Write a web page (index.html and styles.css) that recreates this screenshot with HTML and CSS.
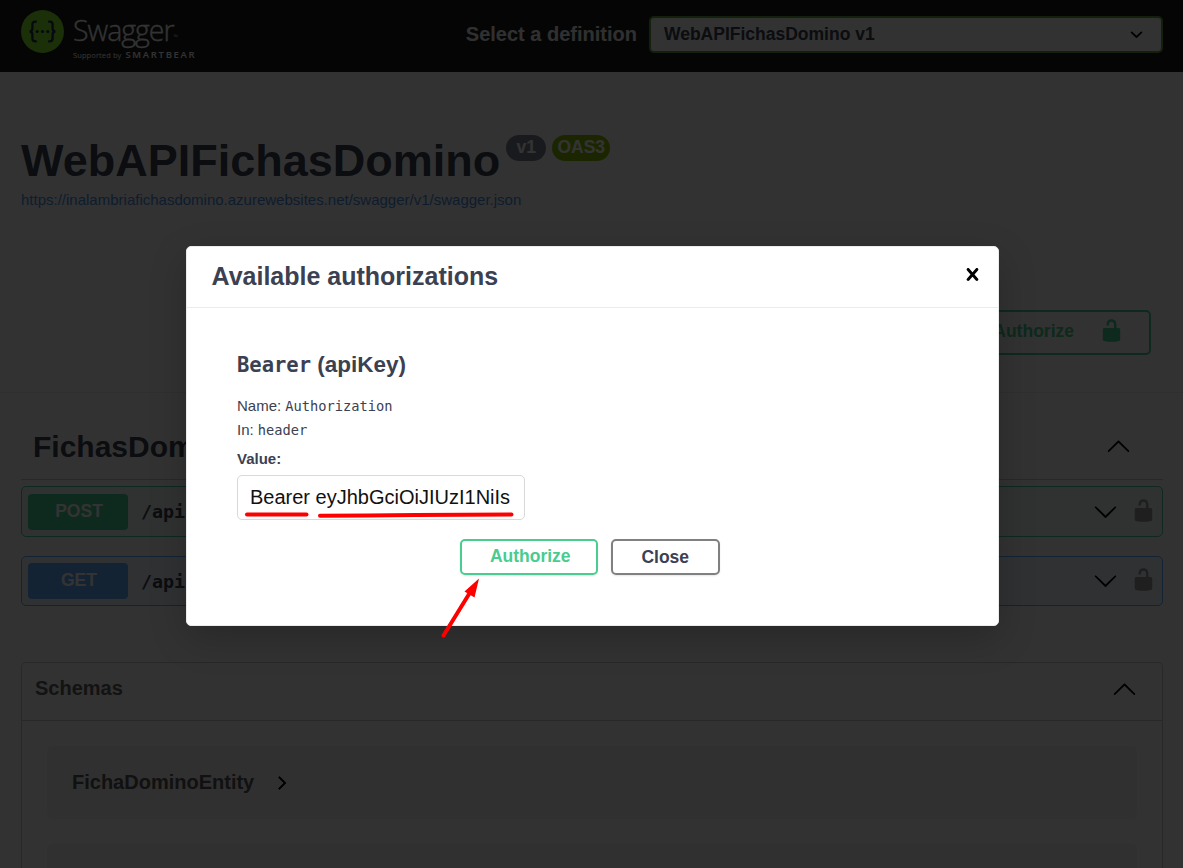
FILE: index.html
```html
<!DOCTYPE html>
<html lang="en">
<head>
<meta charset="utf-8">
<title>Swagger UI</title>
<link rel="stylesheet" href="styles.css">
</head>
<body>
<svg class="defs" width="0" height="0" aria-hidden="true">
  <symbol id="unlocked" viewBox="0 0 20 20"><path d="M15.8 8H14V5.6C14 2.703 12.665 1 10 1 7.334 1 6 2.703 6 5.6V6h2v-.801C8 3.754 8.797 3 10 3c1.203 0 2 .754 2 2.199V8H4c-.553 0-1 .646-1 1.199V17c0 .549.428 1.139.951 1.307l1.197.387C5.672 18.861 6.55 19 7.1 19h5.8c.549 0 1.428-.139 1.951-.307l1.196-.387c.524-.167.953-.757.953-1.306V9.199C17 8.646 16.352 8 15.8 8z"/></symbol>
  <symbol id="arrow-up" viewBox="0 0 20 20"><path d="M17.418 14.908c.272.268.709.268.979 0s.271-.701 0-.969L10.489 6.11c-.27-.267-.707-.267-.979 0l-7.908 7.829c-.271.268-.271.701 0 .969s.708.268.979 0L10 7.767z"/></symbol>
  <symbol id="arrow-down" viewBox="0 0 20 20"><path d="M17.418 6.109c.272-.268.709-.268.979 0s.271.701 0 .969l-7.908 7.83c-.27.268-.707.268-.979 0l-7.908-7.83c-.27-.268-.27-.701 0-.969.271-.268.709-.268.979 0L10 13.25z"/></symbol>
  <symbol id="close" viewBox="0 0 20 20"><path d="M14.348 14.849c-.469.469-1.229.469-1.697 0L10 11.819l-2.651 3.029c-.469.469-1.229.469-1.697 0-.469-.469-.469-1.229 0-1.697l2.758-3.15-2.759-3.152c-.469-.469-.469-1.228 0-1.697.469-.469 1.228-.469 1.697 0L10 8.183l2.651-3.031c.469-.469 1.228-.469 1.697 0 .469.469.469 1.229 0 1.697l-2.758 3.152 2.758 3.15c.469.469.469 1.229 0 1.698z"/></symbol>
  <symbol id="select-arrow" viewBox="0 0 20 20"><path d="M13.418 7.859a.695.695 0 01.978 0 .68.68 0 010 .969l-3.908 3.83a.697.697 0 01-.979 0l-3.908-3.83a.68.68 0 010-.969.695.695 0 01.978 0L10 11l3.418-3.141z"/></symbol>
  <symbol id="chevron" viewBox="0 0 24 24"><path d="M7.293 4.707 14.586 12l-7.293 7.293 1.414 1.414L17.414 12 8.707 3.293z"/></symbol>
</svg>

<header class="topbar">
  <div class="logo">
    <svg class="logo-mark" viewBox="0 0 43 43">
      <circle cx="21.5" cy="21.5" r="21.5" fill="#85ea2d"/>
      <g fill="none" stroke="#173647" stroke-width="2.3">
        <path d="M15.8 11.6h-1.6c-2 0-2.8 1-2.8 2.8v3.8c0 2-.8 3.3-2.8 3.3 2 0 2.8 1.3 2.8 3.3v3.8c0 1.8.8 2.8 2.8 2.8h1.6"/>
        <path d="M27.2 11.6h1.6c2 0 2.8 1 2.8 2.8v3.8c0 2 .8 3.3 2.8 3.3-2 0-2.8 1.3-2.8 3.3v3.8c0 1.8-.8 2.8-2.8 2.8h-1.6"/>
      </g>
      <g fill="#173647"><circle cx="16.2" cy="21.5" r="1.6"/><circle cx="21.5" cy="21.5" r="1.6"/><circle cx="26.8" cy="21.5" r="1.6"/></g>
    </svg>
    <div class="logo-text">
      <div class="logo-name">Swagger<span class="tm">™</span></div>
      <div class="logo-sub"><span>Supported by</span><b>SMARTBEAR</b></div>
    </div>
  </div>
  <div class="definition">
    <span class="definition-label">Select a definition</span>
    <div class="select"><span>WebAPIFichasDomino v1</span><svg class="icon"><use href="#select-arrow"/></svg></div>
  </div>
</header>

<section class="info">
  <div class="title-row">
    <h1>WebAPIFichasDomino</h1>
    <span class="badge">v1</span><span class="badge oas">OAS3</span>
  </div>
  <a class="spec-link">https://inalambriafichasdomino.azurewebsites.net/swagger/v1/swagger.json</a>
  <div class="scheme">
    <div class="authorize-open"><span>Authorize</span><svg class="icon"><use href="#unlocked"/></svg></div>
  </div>
</section>

<main>
  <div class="tag"><h2>FichasDomino</h2><svg class="icon"><use href="#arrow-up"/></svg></div>
  <div class="op post">
    <span class="method">POST</span><span class="path">/api</span>
    <svg class="icon"><use href="#arrow-down"/></svg><svg class="icon lock"><use href="#unlocked"/></svg>
  </div>
  <div class="op get">
    <span class="method">GET</span><span class="path">/api</span>
    <svg class="icon"><use href="#arrow-down"/></svg><svg class="icon lock"><use href="#unlocked"/></svg>
  </div>
  <section class="models">
    <div class="models-head"><h3>Schemas</h3><svg class="icon"><use href="#arrow-up"/></svg></div>
    <div class="models-body">
      <div class="model"><span>FichaDominoEntity</span><svg class="chev"><use href="#chevron"/></svg></div>
      <div class="model last"></div>
    </div>
  </section>
</main>

<div class="backdrop"></div>
<div class="modal">
  <div class="modal-head"><h3>Available authorizations</h3><svg class="icon"><use href="#close"/></svg></div>
  <div class="modal-body">
    <h4><code>Bearer</code> (apiKey)</h4>
    <p>Name: <code>Authorization</code></p>
    <p>In: <code>header</code></p>
    <label>Value:</label>
    <div class="field">Bearer eyJhbGciOiJIUzI1NiIs</div>
    <div class="actions"><div class="btn authorize">Authorize</div><div class="btn">Close</div></div>
  </div>
</div>
<svg class="marks" viewBox="0 0 1183 868">
  <g fill="none" stroke="#fe0000" stroke-width="4" stroke-linecap="round">
    <path d="M247 514.5H306.5"/>
    <path d="M320 515.8L368 515.5 416 515 464 514.8 511.5 514.6"/>
    <path d="M443.5 635.5L470 592.5"/>
  </g>
  <path d="M479 578.5L464.5 591.5 474.5 597.5z" fill="#fe0000"/>
</svg>
</body>
</html>
```

FILE: styles.css
```css
* { box-sizing: border-box; }
body {
  margin: 0;
  width: 1183px;
  height: 868px;
  overflow: hidden;
  position: relative;
  background: #fafafa;
  color: #3b4151;
  font-family: "Liberation Sans", Arial, sans-serif;
}
h1, h2, h3, h4, p { margin: 0; }
.defs { position: absolute; }
.icon { width: 25px; height: 25px; flex: none; display: block; }
code { font-family: "DejaVu Sans Mono", monospace; }

.topbar {
  height: 72px;
  padding: 0 20px 0 21px;
  background: #1b1b1b;
  display: flex;
  justify-content: space-between;
}
.logo { display: flex; padding-top: 10px; gap: 9px; }
.logo-mark { width: 43px; height: 43px; }
.logo-text { color: #fff; font-family: "Open Sans", sans-serif; }
.logo-name { font-size: 28.5px; font-weight: 300; line-height: 40px; letter-spacing: -1px; display: flex; align-items: flex-end; -webkit-text-stroke: .3px #fff; }
.tm { font-size: 6px; line-height: 26px; letter-spacing: 0; -webkit-text-stroke: 0; }
.logo-sub { display: flex; align-items: baseline; gap: 4px; font-size: 7.5px; line-height: 10px; letter-spacing: .1px; }
.logo-sub b { font-size: 9.5px; font-weight: 600; letter-spacing: 1.7px; }
.definition { display: flex; gap: 13px; padding-top: 16px; height: 53px; }
.definition-label { font-size: 20px; font-weight: 700; line-height: 36px; color: #f0f0f0; margin-right: -1px; }
.select {
  width: 514px;
  height: 37px;
  padding: 0 12px 0 13px;
  border: 2px solid #62a03f;
  border-radius: 5px;
  background: #f7f7f7;
  display: flex;
  align-items: center;
  justify-content: space-between;
  font-size: 17.5px;
  font-weight: 700;
}

.info {
  height: 321px;
  padding: 61px 32px 0 21px;
  border-bottom: 1px solid #e8e8e8;
  display: flex;
  flex-direction: column;
}
.title-row { display: flex; align-items: flex-start; height: 54px; }
h1 { font-size: 45px; line-height: 56px; margin-right: 6px; }
.badge {
  margin: 2px 6px 0 0;
  height: 26px;
  width: 40px;
  border-radius: 13px;
  background: #7d8492;
  color: #fff;
  font-size: 17.5px;
  font-weight: 700;
  line-height: 25px;
  text-align: center;
}
.oas { width: 58px; background: #89bf04; }
.spec-link { margin-top: 4px; font-size: 15px; line-height: 18px; color: #4990e2; }
.scheme { display: flex; justify-content: flex-end; margin-top: 101px; }
.authorize-open {
  width: 190px;
  height: 45px;
  padding: 6px 25px 7px;
  border: 2px solid #49cc90;
  border-radius: 5px;
  color: #49cc90;
  fill: #49cc90;
  display: flex;
  justify-content: flex-end;
  gap: 25px;
  font-size: 17.5px;
  font-weight: 700;
  line-height: 26px;
}

main { padding: 0 20px 0 21px; }
.tag {
  height: 87px;
  padding: 21px 32px 0 12px;
  border-bottom: 1px solid #c4c6cb;
  display: flex;
  align-items: center;
  justify-content: space-between;
}
.tag .icon { margin-top: -2px; }
h2 { font-size: 30px; line-height: 36px; padding-top: 1px; }
.op {
  height: 51px;
  margin-top: 6px;
  padding: 0 6px;
  border: 1px solid #49cc90;
  border-radius: 5px;
  background: #ecf7f1;
  display: flex;
  align-items: center;
}
.method {
  width: 100px;
  height: 36px;
  border-radius: 4px;
  background: #49cc90;
  color: #fff;
  font-size: 17.5px;
  font-weight: 700;
  line-height: 34px;
  text-align: center;
  padding-left: 2px;
}
.path { flex: 1; margin-left: 13px; font: 700 18.3px "DejaVu Sans Mono", monospace; }
.op .icon { margin-top: -1px; }
.op .lock { margin-left: 13px; fill: #999; margin-top: -3px; }
.get { height: 50px; margin-top: 19px; border-color: #61affe; background: #eef5fc; }
.get .method { background: #61affe; }
.get .lock { margin-top: -4px; }
.models {
  height: 206px;
  margin-top: 56px;
  border: 1px solid #c8c8c8;
  border-bottom: 0;
  border-radius: 5px 5px 0 0;
}
.models-head {
  height: 58px;
  padding: 0 25px 7px 13px;
  border-bottom: 1px solid #c8c8c8;
  display: flex;
  align-items: center;
  justify-content: space-between;
}
h3 { font-size: 20px; color: #606060; }
.models-body { padding: 25px 25px 0; display: grid; gap: 25px; }
.model {
  height: 73px;
  padding-left: 25px;
  border-radius: 5px;
  background: #f0f0f0;
  color: #555;
  display: flex;
  align-items: center;
  gap: 19px;
  font-size: 20px;
  font-weight: 700;
}
.last { height: 24px; border-radius: 5px 5px 0 0; }
.chev { width: 18px; height: 18px; fill: #000; stroke: #000; stroke-width: 1px; }

.backdrop { position: absolute; inset: 0; background: rgba(0, 0, 0, .8); }
.modal {
  position: absolute;
  left: 185.5px;
  top: 245.5px;
  width: 813px;
  height: 380.5px;
  background: #fff;
  border: 1px solid #ebebeb;
  border-radius: 5px;
  box-shadow: 0 12px 38px rgba(0, 0, 0, .2);
}
.modal-head {
  height: 61px;
  padding: 0 13px 4px 25px;
  border-bottom: 1px solid #ebebeb;
  display: flex;
  align-items: center;
  justify-content: space-between;
}
.modal-head h3 { font-size: 25px; color: #3b4151; padding-top: 3px; }
.modal-body { padding: 43px 50px 0 50.5px; }
h4 { font-size: 22.5px; line-height: 28px; margin-bottom: 15px; }
h4 code { font-size: 20.5px; }
p { font-size: 15px; line-height: 24px; }
p code { font-size: 13.7px; }
label { display: block; font-size: 15px; font-weight: 700; line-height: 20px; margin-top: 7px; }
.field {
  width: 288px;
  height: 45px;
  margin-top: 6px;
  padding-left: 12px;
  border: 1px solid #d9d9d9;
  border-radius: 5px;
  color: #111;
  font-size: 20px;
  line-height: 43px;
  white-space: nowrap;
}
.actions { display: flex; justify-content: center; gap: 13px; margin-top: 19px; margin-right: 5px; }
.btn {
  width: 109px;
  height: 36px;
  border: 2px solid #808080;
  border-radius: 5px;
  box-shadow: 0 1px 2px rgba(0, 0, 0, .1);
  font-size: 17.5px;
  font-weight: 700;
  line-height: 32px;
  text-align: center;
}
.authorize { width: 138px; padding-left: 3px; line-height: 30px; border-color: #49cc90; color: #49cc90; }
.marks { position: absolute; left: 0; top: 0; width: 1183px; height: 868px; }
```
